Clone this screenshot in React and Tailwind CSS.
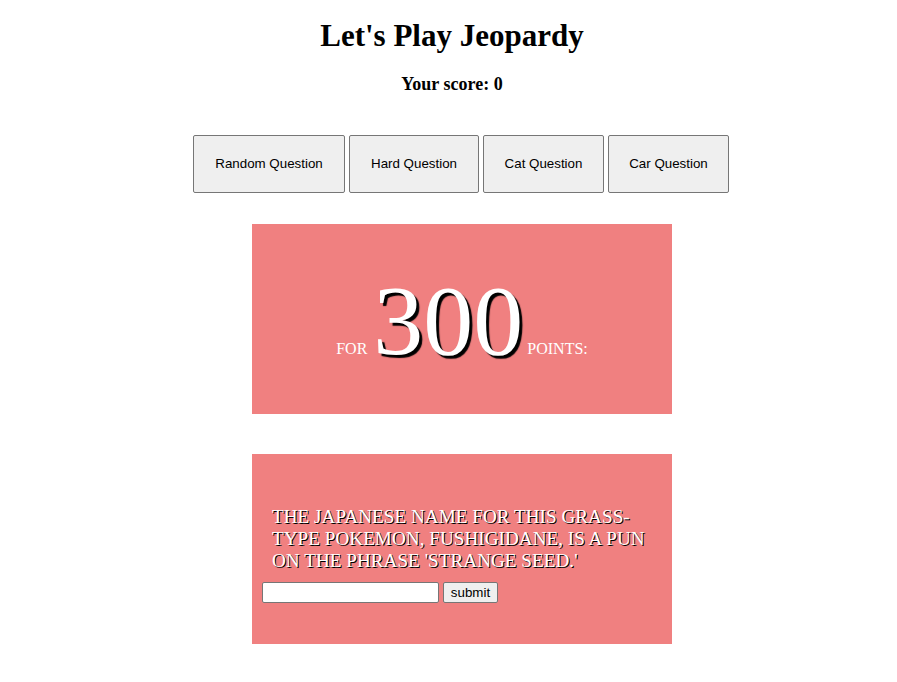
export default function App() {
  const serif = "font-['Liberation_Serif','Times_New_Roman',serif]";
  const sans = "font-['Liberation_Sans',Arial,sans-serif]";
  const btn =
    "bg-[#efefef] border border-[#767676] rounded-[2px] px-5 py-[21px] text-[13.33px] leading-[14px] text-black " +
    sans;
  return (
    <div className={"bg-white w-full min-h-[682px] text-black flex flex-col items-center " + serif}>
      <div className="pl-[7px] flex flex-col items-center">
        <h1 className="mt-[18px] text-[31px] font-bold leading-[36px]">Let's Play Jeopardy</h1>
        <h3 className="mt-[20px] text-[18px] font-bold leading-[21.5px]">Your score: 0</h3>
      </div>
      <div className="pl-[27px] flex flex-col items-center">
        <div className="mt-[39px] flex gap-1 pr-[2px]">
          <button className={btn + " w-[152px]"}>Random Question</button>
          <button className={btn + " w-[130px]"}>Hard Question</button>
          <button className={btn + " w-[121px]"}>Cat Question</button>
          <button className={btn + " w-[121px]"}>Car Question</button>
        </div>
        <div className="mt-[31px] w-[420px] h-[190px] bg-[#f08080] flex items-center justify-center pt-[3px] text-white">
          <div className="flex items-baseline">
            <span className="text-[16px]">FOR</span>
            <span className="ml-[6px] text-[100px] leading-[115px] [text-shadow:3px_3px_1px_#000]">300</span>
            <span className="ml-[4px] text-[16px]">POINTS:</span>
          </div>
        </div>
        <div className="mt-[40px] w-[420px] h-[190px] bg-[#f08080] pt-[52px] px-[10px]">
          <p className="px-[10px] text-[19.2px] leading-[22px] text-white uppercase [text-shadow:1px_1px_0.5px_#000]">
            The Japanese name for this grass-type Pokemon, Fushigidane, is a pun on the phrase 'strange seed.'
          </p>
          <div className="mt-[10px] flex items-center gap-1">
            <input
              type="text"
              className={"w-[177px] h-[21px] bg-white border border-[#767676] rounded-[2px] px-[2px] text-[13.33px] " + sans}
            />
            <button
              className={"h-[21px] w-[55px] bg-[#efefef] border border-[#767676] rounded-[2px] text-[13.33px] leading-[15px] text-black " + sans}
            >
              submit
            </button>
          </div>
        </div>
      </div>
    </div>
  );
}
